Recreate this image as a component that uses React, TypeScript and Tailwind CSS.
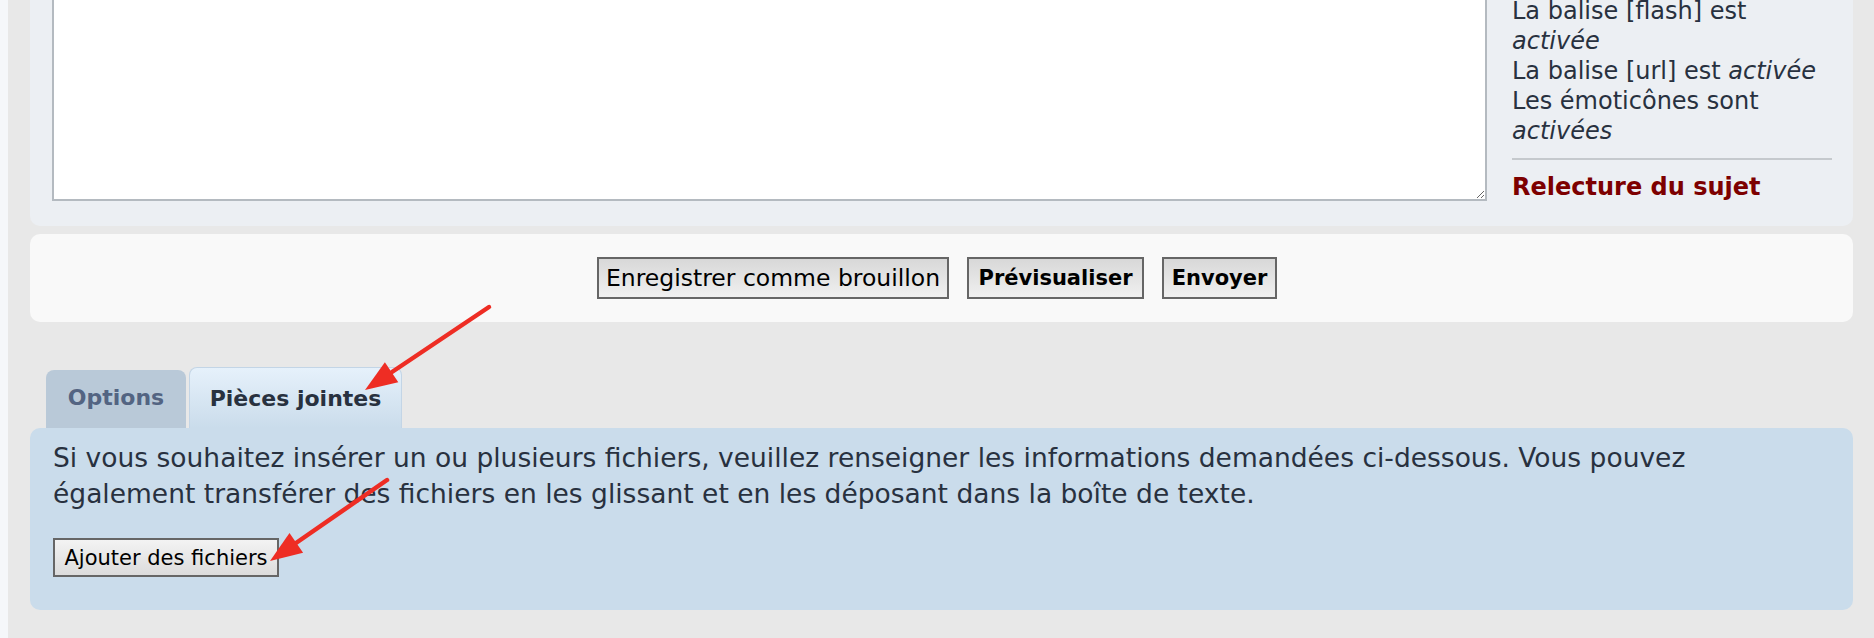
export default function App() {
  return (
    <div className="relative h-[638px] w-full overflow-hidden bg-[#f5f7fa] font-['DejaVu_Sans',sans-serif]">
      <div className="ml-[8px] flex h-full flex-col bg-[#e8e8e8] pl-[22px] pr-[21px]">
        {/* Editor panel */}
        <div className="-mt-[200px] flex items-end rounded-[10px] bg-[#eceff3] pb-[24px] pl-[22px] pr-[21px] pt-[20px]">
          <textarea className="mb-[1px] h-[381px] flex-1 border-2 border-[#b4bac0] bg-white outline-none" />
          <div className="ml-[25px] w-[320px] text-[24px] leading-[30px] text-[#28313f]">
            <div>
              La balise [flash] est <em className="italic">activée</em>
            </div>
            <div>
              La balise [url] est <em className="italic">activée</em>
            </div>
            <div>
              Les émoticônes sont <em className="italic">activées</em>
            </div>
            <div className="my-[12px] h-[2px] bg-[#c5c9cd]" />
            <div className="font-bold text-[#7d0000]">Relecture du sujet</div>
          </div>
        </div>

        {/* Submit buttons panel */}
        <div className="mt-[8px] flex h-[88px] shrink-0 items-center justify-center gap-[18px] rounded-[10px] bg-[#f9f9f9] pr-[9px]">
          <button className="flex h-[42px] w-[352px] items-center justify-center border-2 border-[#666666] bg-linear-to-b from-[#d8d8d8] to-[#f0f0f0] text-[23.5px] leading-[26px] text-black">
            Enregistrer comme brouillon
          </button>
          <button className="flex h-[42px] w-[177px] items-center justify-center border-2 border-[#666666] bg-linear-to-b from-[#d8d8d8] to-[#f0f0f0] text-[21px] font-bold leading-[26px] text-black">
            Prévisualiser
          </button>
          <button className="flex h-[42px] w-[115px] items-center justify-center border-2 border-[#666666] bg-linear-to-b from-[#d8d8d8] to-[#f0f0f0] text-[21px] font-bold leading-[26px] text-black">
            Envoyer
          </button>
        </div>

        {/* Tabs */}
        <div className="mt-[45px] flex shrink-0 items-end gap-[3px] pl-[16px]">
          <div className="flex h-[58px] w-[140px] items-center justify-center rounded-t-[8px] bg-[#b9c9d8] pb-[4px] text-[22px] font-bold text-[#536482]">
            Options
          </div>
          <div className="flex h-[61px] w-[213px] items-center justify-center rounded-t-[8px] border border-b-0 border-[#c3d5e6] bg-linear-to-b from-[#e6f1fb] to-[#cadceb] text-[22px] font-bold text-[#28313f]">
            Pièces jointes
          </div>
        </div>

        {/* Attachment panel */}
        <div className="shrink-0 rounded-[10px] bg-[#cadceb] pb-[33px] pl-[23px] pr-[23px] pt-[12px]">
          <p className="text-[26.5px] leading-[36px] text-[#28313f]">
            Si vous souhaitez insérer un ou plusieurs fichiers, veuillez renseigner les informations demandées ci-dessous. Vous pouvez
            <br />
            également transférer des fichiers en les glissant et en les déposant dans la boîte de texte.
          </p>
          <button className="mt-[26px] flex h-[39px] w-[226px] items-center justify-center border-2 border-[#666666] bg-linear-to-b from-[#f3f3f3] to-[#dcdcdc] text-[21px] leading-[24px] text-black">
            Ajouter des fichiers
          </button>
        </div>
      </div>

      {/* Red annotation arrows */}
      <svg
        className="pointer-events-none absolute left-0 top-0"
        width="1874"
        height="638"
        viewBox="0 0 1874 638"
      >
        <line x1="489" y1="307" x2="392" y2="372" stroke="#ee2d24" strokeWidth="4.5" strokeLinecap="round" />
        <polygon points="365,390 398.3,382.2 384.9,362.2" fill="#ee2d24" />
        <line x1="387" y1="480" x2="296" y2="543" stroke="#ee2d24" strokeWidth="4.5" strokeLinecap="round" />
        <polygon points="270,561 303.1,552.7 289.5,532.9" fill="#ee2d24" />
      </svg>
    </div>
  );
}
